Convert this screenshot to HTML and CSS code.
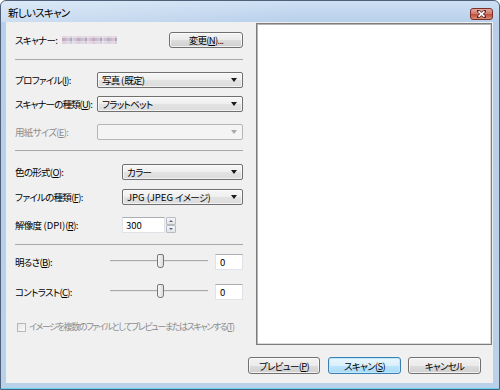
FILE: index.html
```html
<!DOCTYPE html>
<html lang="ja">
<head>
<meta charset="utf-8">
<title>新しいスキャン</title>
<link rel="stylesheet" href="styles.css">
</head>
<body>
<div class="window">
  <div class="titlebar">
    <span class="title">新しいスキャン</span>
    <span class="close">
      <svg width="9" height="8" viewBox="0 0 9 8"><path d="M1 1 L8 7 M8 1 L1 7" stroke="#5a2a24" stroke-width="3" stroke-linecap="square"/><path d="M1.5 1.3 L7.5 6.7 M7.5 1.3 L1.5 6.7" stroke="#fff" stroke-width="1.6"/></svg>
    </span>
  </div>
  <div class="client">
    <div class="main">
      <div class="settings">
        <div class="row r-scanner">
          <span class="label">スキャナー:</span>
          <span class="mosaic"></span>
          <span class="btn btn-change">変更(<u>N</u>)...</span>
        </div>
        <div class="sep s1"></div>
        <div class="row r-profile">
          <span class="label lw-a">プロファイル(<u>I</u>):</span>
          <div class="combo wa"><span class="val">写真 <span class="lat">(</span>既定<span class="lat">)</span></span><i class="arrow"></i></div>
        </div>
        <div class="row r-type">
          <span class="label lw-a tight">スキャナーの種類(<u>U</u>):</span>
          <div class="combo wa"><span class="val">フラットベット</span><i class="arrow"></i></div>
        </div>
        <div class="row r-paper">
          <span class="label lw-a dis">用紙サイズ(<u>E</u>):</span>
          <div class="combo wa disabled"><span class="val"></span><i class="arrow"></i></div>
        </div>
        <div class="sep s2"></div>
        <div class="row r-color">
          <span class="label lw-b">色の形式(<u>O</u>):</span>
          <div class="combo wb"><span class="val">カラー</span><i class="arrow"></i></div>
        </div>
        <div class="row r-file">
          <span class="label lw-b">ファイルの種類(<u>F</u>):</span>
          <div class="combo wb"><span class="val"><span class="lat">JPG (JPEG </span>イメージ<span class="lat">)</span></span><i class="arrow"></i></div>
        </div>
        <div class="row r-dpi">
          <span class="label lw-b">解像度<span class="lat"> (DPI)</span>(<u>R</u>):</span>
          <div class="edit dpi lat">300</div>
          <div class="spin"><span class="up"><i></i></span><span class="down"><i></i></span></div>
        </div>
        <div class="sep s3"></div>
        <div class="row r-bright">
          <span class="label lw-c">明るさ(<u>B</u>):</span>
          <div class="slider"><span class="track"></span><span class="thumb"></span></div>
          <div class="edit val-box">0</div>
        </div>
        <div class="row r-contrast">
          <span class="label lw-c">コントラスト(<u>C</u>):</span>
          <div class="slider"><span class="track"></span><span class="thumb"></span></div>
          <div class="edit val-box">0</div>
        </div>
        <div class="row r-check">
          <span class="checkbox"></span>
          <span class="label dis check-label">イメージを複数のファイルとしてプレビューまたはスキャンする(<u>T</u>)</span>
        </div>
      </div>
      <div class="preview"></div>
    </div>
    <div class="buttons">
      <span class="btn b-preview">プレビュー(<u>P</u>)</span>
      <span class="btn b-scan default">スキャン(<u>S</u>)</span>
      <span class="btn b-cancel">キャンセル</span>
    </div>
  </div>
</div>
</body>
</html>
```
FILE: styles.css
```css
* { box-sizing: border-box; }
html, body { margin: 0; padding: 0; }
body {
  width: 500px;
  height: 390px;
  overflow: hidden;
  background: #fff;
  font-family: "Noto Sans CJK JP", "Noto Sans", sans-serif;
  font-size: 9.5px;
  letter-spacing: -0.7px;
  font-feature-settings: "palt";
  color: #000;
}
u { text-decoration: underline; text-underline-offset: 1px; }
.lat { letter-spacing: 0; }

.window {
  width: 500px;
  height: 390px;
  border: 1px solid #4f6178;
  border-radius: 6px 6px 0 0;
  background: linear-gradient(#cde0f4 0, #b7cfea 22px, #bad1ea 100%);
  box-shadow: inset 0 -1px 0 #68d2f3;
  display: flex;
  flex-direction: column;
}

.titlebar {
  height: 21px;
  display: flex;
  align-items: flex-start;
  background: linear-gradient(90deg, rgba(255,255,255,0.3), rgba(255,255,255,0) 60%);
  border-radius: 5px 5px 0 0;
}
.title {
  margin: 4px 0 0 7px;
  font-size: 10.5px;
  letter-spacing: -0.7px;
  line-height: 16px;
}
.close {
  margin: 7px 6px 0 auto;
  width: 23px;
  height: 12px;
  border: 1px solid #7a2f27;
  border-radius: 3px;
  background: linear-gradient(#e4a89f 0, #d17a6d 45%, #c0503f 55%, #d88c72 100%);
  display: flex;
  align-items: center;
  justify-content: center;
}
.close svg { display: block; }

.client {
  margin: 0 6px 0 5px;
  height: 361px;
  background: #f0f0f0;
  display: flex;
  flex-direction: column;
}

.main {
  display: flex;
  height: 324px;
}
.settings {
  width: 250px;
  padding: 0 13px 0 9px;
  display: flex;
  flex-direction: column;
}
.preview {
  margin-top: 1px;
  width: 236px;
  height: 322px;
  background: #fff;
  border: 1px solid #7d7d7d;
  box-shadow: inset 1px 1px 0 #b4b4b4, inset -1px -1px 0 #dadada;
}

.row {
  display: flex;
  align-items: center;
  height: 16px;
  flex: none;
}
.label {
  white-space: nowrap;
  line-height: 16px;
  flex: none;
}
.tight { letter-spacing: -0.9px; }
.dis { color: #8c8c8c; }
.lw-a { width: 82px; }
.lw-b { width: 107px; }
.lw-c { width: 95px; }

.sep {
  height: 1px;
  background: #a8a8a8;
  flex: none;
}

.r-scanner { margin-top: 10px; }
.s1 { margin-top: 11px; }
.r-profile { margin-top: 12px; }
.r-type { margin-top: 8px; }
.r-paper { margin-top: 12px; }
.s2 { margin-top: 10px; }
.r-color { margin-top: 13px; }
.r-file { margin-top: 9px; }
.r-dpi { margin-top: 12px; }
.s3 { margin-top: 11px; }
.r-bright { margin-top: 9px; }
.r-contrast { margin-top: 14px; }
.r-check { margin-top: 22px; height: 10px; }
.check-label { font-size: 9px; letter-spacing: -1.4px; }

.mosaic {
  margin-left: 5px;
  width: 55px;
  height: 8px;
  background:
    linear-gradient(rgba(236,226,234,0.75) 0 2px, transparent 2px 5px, rgba(240,232,238,0.6) 5px),
    repeating-linear-gradient(90deg, #c9a8c2 0 3px, #b9bfd0 3px 5px, #d9c1d3 5px 8px, #a9a9bc 8px 10px, #e3cfdc 10px 12px, #c4c6d3 12px 15px);
  flex: none;
}

.btn {
  display: flex;
  align-items: center;
  justify-content: center;
  height: 17px;
  border: 1px solid #707070;
  border-radius: 3px;
  background: linear-gradient(#f2f2f2 0, #ebebeb 50%, #dddddd 50%, #cfcfcf 100%);
  box-shadow: inset 0 0 0 1px rgba(255,255,255,0.7);
  white-space: nowrap;
  flex: none;
}
.btn-change {
  margin-left: auto;
  width: 74px;
  height: 16px;
}

.combo {
  position: relative;
  height: 16px;
  border: 1px solid #707070;
  border-radius: 2px;
  background: linear-gradient(#f6f6f6 0, #efefef 50%, #e3e3e3 50%, #dcdcdc 100%);
  box-shadow: inset 0 0 0 1px rgba(255,255,255,0.6);
  display: flex;
  align-items: center;
  flex: none;
}
.wa { width: 146px; }
.wb { width: 121px; }
.combo .val {
  padding-left: 4px;
  line-height: 14px;
  white-space: nowrap;
}
.arrow {
  position: absolute;
  right: 5px;
  top: 5px;
  width: 0;
  height: 0;
  border-left: 3.5px solid transparent;
  border-right: 3.5px solid transparent;
  border-top: 4px solid #1a1a1a;
}
.combo.disabled {
  border-color: #b5b5b5;
  background: #f4f4f4;
  box-shadow: none;
}
.combo.disabled .arrow { border-top-color: #a8a8a8; }

.edit {
  height: 16px;
  background: #fff;
  border: 1px solid #dfe3e8;
  border-top-color: #abadb3;
  line-height: 14px;
  padding-left: 3px;
  flex: none;
}
.dpi { width: 43px; }
.spin {
  width: 10px;
  height: 16px;
  margin-left: 1px;
  display: flex;
  flex-direction: column;
  flex: none;
}
.spin span {
  flex: 1;
  border: 1px solid #b8bcc2;
  border-radius: 1px;
  background: linear-gradient(#f7f7f7, #e4e4e4);
  display: flex;
  align-items: center;
  justify-content: center;
}
.spin .up i {
  width: 0; height: 0;
  border-left: 2px solid transparent;
  border-right: 2px solid transparent;
  border-bottom: 2px solid #4a6a9a;
}
.spin .down i {
  width: 0; height: 0;
  border-left: 2px solid transparent;
  border-right: 2px solid transparent;
  border-top: 2px solid #4a6a9a;
}

.slider {
  position: relative;
  width: 98px;
  height: 16px;
  flex: none;
}
.track {
  position: absolute;
  left: 0;
  right: 0;
  top: 6px;
  height: 2px;
  border-top: 1px solid #a9a9a9;
  background: #e6e6e6;
}
.thumb {
  position: absolute;
  left: 47px;
  top: 0;
  width: 7px;
  height: 14px;
  border: 1px solid #767676;
  border-radius: 2px 2px 3px 3px;
  background: linear-gradient(90deg, #f8f8f8, #dcdcdc);
}
.val-box {
  margin-left: auto;
  width: 28px;
  padding-left: 4px;
}

.checkbox {
  width: 9px;
  height: 9px;
  margin-left: 2px;
  margin-right: 3px;
  border: 1px solid #b7b7b7;
  background: linear-gradient(135deg, #e6e6e6, #fbfbfb);
  flex: none;
}

.buttons {
  margin-top: 11px;
  display: flex;
  justify-content: flex-end;
  padding-right: 12px;
}
.b-preview { width: 72px; }
.b-scan { width: 73px; margin-left: 8px; }
.b-cancel { width: 73px; margin-left: 7px; }
.btn.default {
  border-color: #3c7fb1;
  background: linear-gradient(#eaf6fd 0, #d9f0fc 50%, #bee6fd 50%, #a7d9f5 100%);
  box-shadow: inset 0 0 0 1px #bfe7fd;
}
```
